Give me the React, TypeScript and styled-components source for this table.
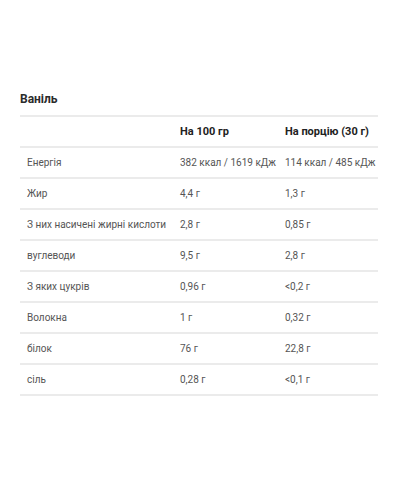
import React from 'react';
import styled, { createGlobalStyle } from 'styled-components';

const rows: [string, string, string][] = [
	['Енергія', '382 ккал / 1619 кДж', '114 ккал / 485 кДж'],
	['Жир', '4,4 г', '1,3 г'],
	['З них насичені жирні кислоти', '2,8 г', '0,85 г'],
	['вуглеводи', '9,5 г', '2,8 г'],
	['З яких цукрів', '0,96 г', '<0,2 г'],
	['Волокна', '1 г', '0,32 г'],
	['білок', '76 г', '22,8 г'],
	['сіль', '0,28 г', '<0,1 г'],
];

const App: React.FC = () => {
	return (
		<>
			<GlobalStyle />
			<Page>
				<Title>Ваніль</Title>
				<Table>
					<thead>
						<tr>
							<HeadCell />
							<HeadCell>На 100 гр</HeadCell>
							<HeadCell>На порцію (30 г)</HeadCell>
						</tr>
					</thead>
					<tbody>
						{rows.map((row) => (
							<tr key={row[0]}>
								{row.map((cell, i) => (
									<Cell key={i}>{cell}</Cell>
								))}
							</tr>
						))}
					</tbody>
				</Table>
			</Page>
		</>
	);
};

export default App;

const GlobalStyle = createGlobalStyle`
	body {
		margin: 0;
		background: #fff;
		font-family: Roboto, 'Liberation Sans', sans-serif;
	}
`;

const Page = styled.main`
	width: 400px;
	height: 500px;
	padding: 92px 22px 0 20px;
	box-sizing: border-box;
`;

const Title = styled.h3`
	margin: 0;
	height: 23px;
	font-size: 12px;
	font-weight: 700;
	color: #2b2b2b;
	line-height: 15px;
`;

const Table = styled.table`
	width: 358px;
	border-collapse: collapse;
	table-layout: fixed;
	border-top: 2px solid #ebebeb;

	td:nth-child(1),
	th:nth-child(1) {
		width: 146px;
	}

	td:nth-child(2),
	th:nth-child(2) {
		width: 98px;
	}
`;

const HeadCell = styled.th`
	height: 29px;
	padding: 0 0 0 7px;
	text-align: left;
	font-size: 11px;
	font-weight: 700;
	color: #222;
	border-bottom: 2px solid #ebebeb;
	white-space: nowrap;
`;

const Cell = styled.td`
	height: 29px;
	padding: 0 0 0 7px;
	font-size: 10px;
	color: #555;
	border-bottom: 2px solid #ebebeb;
	white-space: nowrap;
`;
